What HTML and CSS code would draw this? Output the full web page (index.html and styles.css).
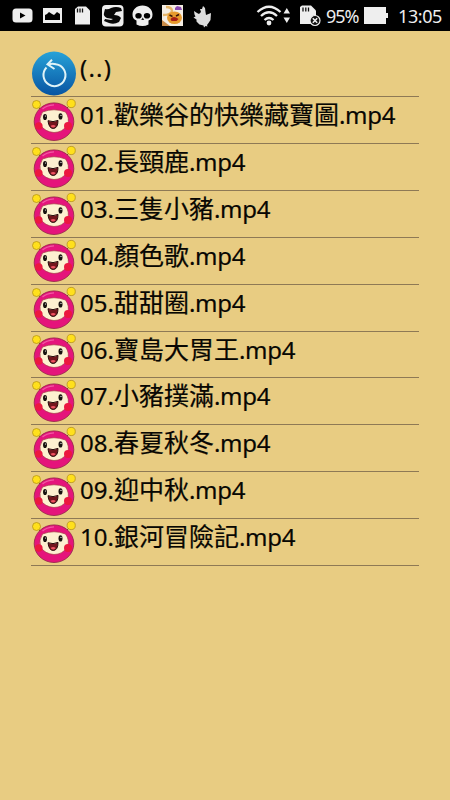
FILE: index.html
```html
<!DOCTYPE html>
<html lang="zh-Hant">
<head>
<meta charset="utf-8">
<title>Videos</title>
<link rel="stylesheet" href="styles.css">
</head>
<body>
<header class="status">
  <svg class="status-icons" width="225" height="32" viewBox="0 0 225 32">
    <rect x="12.500" y="8.500" width="20" height="14" rx="3.500" fill="#eee"/><path d="M20 12.500v6l5.500-3z" fill="#000"/>
    <path fill="#eee" fill-rule="evenodd" d="M43 8h19v15H43zM45 20h15v-6l-3-2-3 3-2-1-3-2-2 2-2 1z"/>
    <path fill="#eee" d="M75 9l3-2.500h8l4 4V24.500H75z"/><path d="M77.500 8.500v4M80 8.500v4M82.500 8.500v4" stroke="#111" stroke-width="1.300"/>
    <rect x="102" y="5" width="21.500" height="21.500" rx="4" fill="#eee"/>
    <path d="M105 9q3 1 6-1 5-2 10 0l1 3-6 1-2 3q5 0 7 3l-2 4q-5 3-10 1l-5-2 1-2 6 1 2-1-6-1q-4-2-3-5z" fill="#080808"/>
    <path fill="#eee" d="M142.500 5.500c6 0 10 4 10 9 0 3-1 5-4 6v4q-6 3-12 0v-4c-3-1-4-3-4-6 0-5 4-9 10-9z"/>
    <ellipse cx="138.500" cy="15.800" rx="3.200" ry="2.800"/><ellipse cx="147" cy="15.800" rx="3.200" ry="2.800"/><path d="M142.700 17.500l-1.500 2.500h3z" fill="#222"/>
    <rect x="162" y="5" width="21" height="21" fill="#f4ede3"/>
    <path d="M175 8l2-2 4 1 1 3-7 0z" fill="#8b4bb1"/>
    <path d="M162 20l8 6h-8z" fill="#c98b48"/><path d="M163 15q8 0 9-4 0-4-6-4" fill="none" stroke="#e5b568" stroke-width="2.400"/>
    <ellipse cx="174.500" cy="17.800" rx="7.500" ry="6.300" fill="#e79a2d"/><path d="M170.500 19q3-4 8 0l-2 2h-5z" fill="#a81d15"/><path d="M169.500 15l3 1.500M179 14.500l-3 1.500" stroke="#3b1608" stroke-width="1.500"/>
    <path fill="#ddd" d="M194 11l3 2 2 1 2-2-1-3 2 0 1-3 2 2 .5 4 .5 3 5-2-.5 7-2 3-1.500 2 .5 1.500-2-.5-1.500 1.500-.5-2-4-1-3-3v-2l-3-2 2-1-1-2z"/>
  </svg>
  <div class="status-right">
    <svg width="74" height="32" viewBox="250 0 74 32">
      <g fill="none" stroke="#eee" stroke-width="2.300"><path d="M257.500 12q11.500-10.500 23 0M261 16q8-7.500 16 0M264.500 20q4.500-4 9 0"/></g>
      <circle cx="269" cy="23" r="2.400" fill="#eee"/>
      <path fill="#eee" d="M283.500 13.500h6.500L286.800 8zM283.500 17.500h6.500L286.800 23z"/>
      <path fill="#eee" d="M300 7l2-1.500h9l5 5V24h-16z"/><path d="M303 7.500v4M305.800 7.500v4M308.500 7.500v4" stroke="#111" stroke-width="1.300"/>
      <circle cx="315" cy="20.500" r="5" fill="#111" stroke="#eee" stroke-width="1.200"/><path d="M312.800 18.300l4.400 4.400M317.200 18.300l-4.400 4.400" stroke="#eee" stroke-width="1.600"/>
    </svg>
    <span class="percent">95%</span>
    <svg class="battery" width="25" height="17" viewBox="0 0 25 17"><path fill="#eee" d="M0 0h22v6h2v5h-2v6H0z"/></svg>
    <span class="time">13:05</span>
  </div>
</header>
<svg class="defs" width="0" height="0">
  <defs>
    <linearGradient id="blue" x2="0" y2="1"><stop offset="0" stop-color="#27a2d8"/><stop offset="1" stop-color="#0754a2"/></linearGradient>
    <symbol id="face" viewBox="0 0 46 46">
      <path d="M10 11L7 8M36 11l3-3" stroke="#77641c" stroke-width="1"/>
      <ellipse cx="24" cy="23.700" rx="19.800" ry="18.800" fill="#e5147b" stroke="#922048" stroke-width=".8"/>
      <path d="M12.500 11Q16 7.500 24 6.800" fill="none" stroke="#f05aa4" stroke-width="1.200"/>
      <path d="M12.500 14q11.500-4.500 23 0 4.500 6 2 13-5 7.500-13.500 7.500-9-.5-13.500-7.500-2-7 2-13z" fill="#fdf0d0" stroke="#a53a45" stroke-width=".7"/>
      <circle cx="8.800" cy="28" r="3.800" fill="#ec173f"/><circle cx="38" cy="28" r="4" fill="#ec173f"/>
      <ellipse cx="15" cy="19" rx="2" ry="3.100" fill="#17120f"/><ellipse cx="30.500" cy="18.400" rx="2" ry="3.100" fill="#17120f"/>
      <circle cx="15.500" cy="18" r=".6" fill="#fff"/><circle cx="31" cy="17.400" r=".6" fill="#fff"/>
      <path d="M18 22.700q5 2 10-.3 0 7.800-4.700 8.100-4.400 0-5.300-7.800z" fill="#73151d" stroke="#2a0d0d"/><path d="M20.500 28q2.700-2 5.300 0-2.600 3.200-5.300 0z" fill="#ef5261"/>
      <circle cx="6.500" cy="6.500" r="4" fill="#ffe01c" stroke="#ae8b12" stroke-width=".7"/><circle cx="41.200" cy="5.500" r="4.100" fill="#ffe01c" stroke="#ae8b12" stroke-width=".7"/>
    </symbol>
  </defs>
</svg>
<main class="list">
  <div class="row"><svg class="icon" viewBox="0 0 46 46"><circle cx="24" cy="22.500" r="22" fill="url(#blue)"/><g fill="none" stroke="#dff3f7" stroke-width="2"><path d="M16.500 16.500A11 11 0 1 0 26 13.200Q22 12 18 13.500"/><path d="M22 8.800L17.500 13.400l7 4.600"/></g></svg><span class="name parent">(..)</span></div>
  <div class="row"><svg class="icon"><use href="#face"/></svg><span class="name">01.<b>歡樂谷的快樂藏寶圖</b><i>.mp4</i></span></div>
  <div class="row"><svg class="icon"><use href="#face"/></svg><span class="name">02.<b>長頸鹿</b><i>.mp4</i></span></div>
  <div class="row"><svg class="icon"><use href="#face"/></svg><span class="name">03.<b>三隻小豬</b><i>.mp4</i></span></div>
  <div class="row"><svg class="icon"><use href="#face"/></svg><span class="name">04.<b>顏色歌</b><i>.mp4</i></span></div>
  <div class="row"><svg class="icon"><use href="#face"/></svg><span class="name">05.<b>甜甜圈</b><i>.mp4</i></span></div>
  <div class="row"><svg class="icon"><use href="#face"/></svg><span class="name">06.<b>寶島大胃王</b><i>.mp4</i></span></div>
  <div class="row"><svg class="icon"><use href="#face"/></svg><span class="name">07.<b>小豬撲滿</b><i>.mp4</i></span></div>
  <div class="row"><svg class="icon"><use href="#face"/></svg><span class="name">08.<b>春夏秋冬</b><i>.mp4</i></span></div>
  <div class="row"><svg class="icon"><use href="#face"/></svg><span class="name">09.<b>迎中秋</b><i>.mp4</i></span></div>
  <div class="row"><svg class="icon"><use href="#face"/></svg><span class="name">10.<b>銀河冒險記</b><i>.mp4</i></span></div>
</main>
</body>
</html>
```
FILE: styles.css
```css
* { box-sizing: border-box; }
body { margin: 0; height: 800px; background: #e8cc82; color: #080703; font-family: "Noto Sans", "Noto Sans CJK TC", sans-serif; overflow: hidden; }
svg { display: block; flex: none; }
.defs { height: 0; }
.status { height: 31px; display: flex; justify-content: space-between; background: #000; overflow: hidden; }
.status-right { display: flex; width: 200px; color: #eee; font-size: 18px; line-height: 32px; white-space: nowrap; }
.percent { width: 40px; padding-left: 2px; letter-spacing: -1px; }
.battery { margin: 7px 9px 0 0; }
.time { letter-spacing: -.4px; }
.list { margin: 19.200px 31px 0; }
.row { height: 46.900px; display: flex; border-bottom: 1px solid #8e7955; }
.icon { width: 46px; height: 46px; margin-left: -1px; margin-top: 1px; overflow: visible; }
.name { padding-left: 4px; font-size: 24px; line-height: 33px; white-space: nowrap; -webkit-text-stroke: .2px #080703; }
.parent { letter-spacing: 1.200px; line-height: 35px; }
.name b { font: 400 25px/33px "Noto Sans CJK TC", sans-serif; }
.name i { font-style: normal; letter-spacing: -.3px; }
```
